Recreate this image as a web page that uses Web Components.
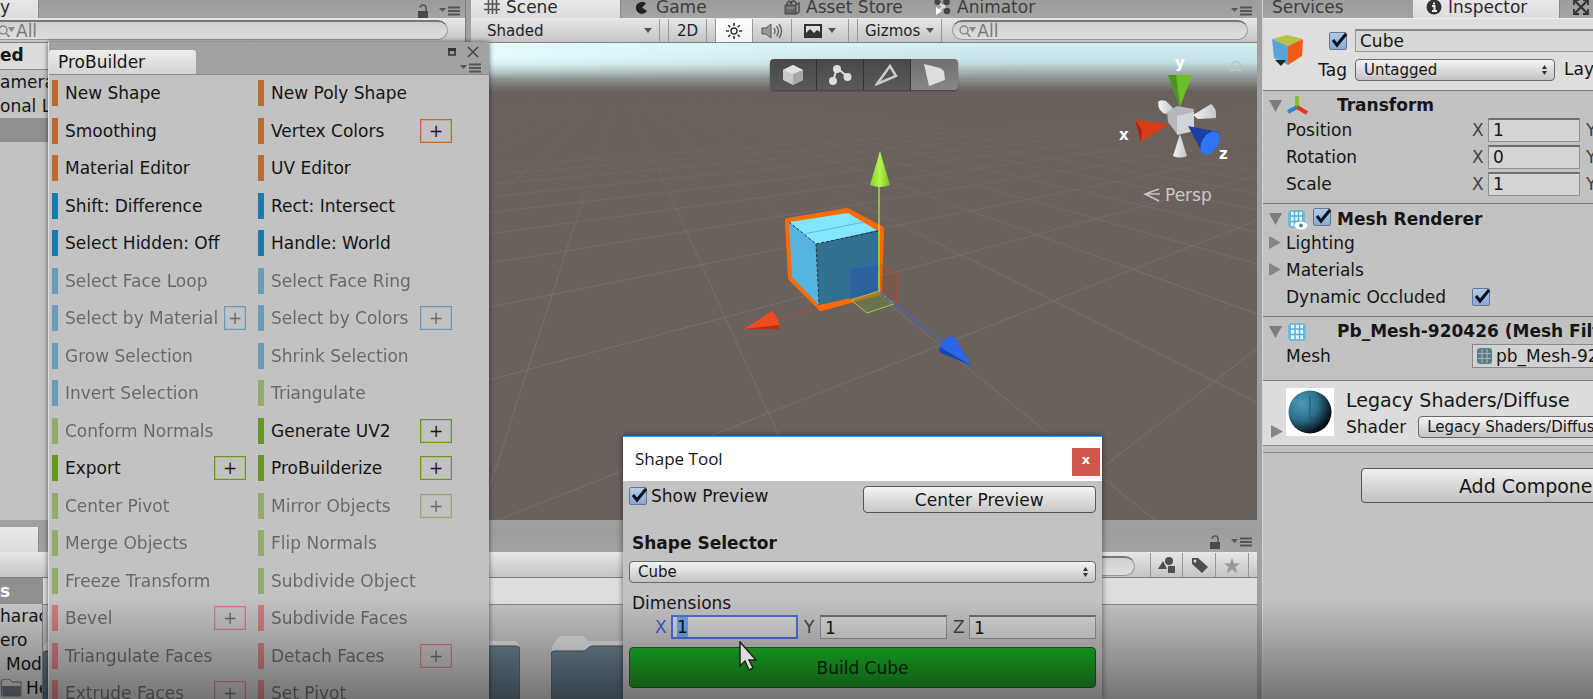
<!DOCTYPE html>
<html lang="en">
<head>
<meta charset="utf-8">
<title>Editor</title>
<style>
    html, body {
        margin: 0;
        height: 100%;
        overflow: hidden;
    }
    body {
        font-family: "DejaVu Sans", Verdana, sans-serif;
        font-size: 17px;
        line-height: 20px;
        color: #161616;
        background: #a2a2a2;
    }
</style>
</head>
<body>
<editor-app></editor-app>

<script>
const BASE = `
    * { box-sizing: border-box; }
    input, button, select { font: inherit; color: inherit; margin: 0; }
    svg { display: block; }
`;

function define(tag, css, html, setup) {
    customElements.define(tag, class extends HTMLElement {
        connectedCallback() {
            if (this.shadowRoot) return;
            this.attachShadow({ mode: 'open' });
            const markup = typeof html === 'function' ? html(this) : html;
            this.shadowRoot.innerHTML = `<style>${BASE}${css}</style>${markup}`;
            if (setup) setup(this.shadowRoot, this);
        }
    });
}

// name: [width, height, shapes]
const ICONS = {
    lock: [12, 14, '<path d="M1 7h10v7H1z" fill="#4a4a4a"/><path d="M3 3.5C4 0 9 0 9 4v3" fill="none" stroke="#555" stroke-width="1.6"/>'],
    menu: [22, 10, '<path d="M0 2h7L3.500 6z" fill="#555"/><path d="M9 1.500h12M9 5h12M9 8.500h12" stroke="#555" stroke-width="1.800"/>'],
    max: [8, 8, '<path d="M1 1h6v6H1z" fill="none" stroke="#333" stroke-width="1.600"/><path d="M0 0h8v3H0z" fill="#333"/>'],
    close: [12, 12, '<path d="M1 1l10 10M11 1L1 11" stroke="#444" stroke-width="1.500"/>'],
    grid: [16, 16, '<path d="M4.500 1v14M8.500 1v14M12.500 1v14M0 5h16M0 10.500h16" stroke="#555" stroke-width="1.600"/>'],
    game: [16, 16, '<path d="M12 4.500A6 6 0 1 0 13 12L8 8.500z" fill="#222"/>'],
    store: [16, 16, '<path d="M1 6h11v9H1z" fill="#666" stroke="#444"/><path d="M12 6l3-2v9l-3 2M3 6c0-5 4-5 5-1M6 5c1-4 6-4 6 0" fill="none" stroke="#444" stroke-width="1.400"/><path d="M3 9h7" stroke="#999"/>'],
    animator: [17, 17, '<path d="M4 4l10 9M13 4L6 12" stroke="#ddd" stroke-width="2"/><circle cx="3.500" cy="4" r="3" fill="#444"/><circle cx="12.500" cy="4" r="3.300" fill="#444"/><circle cx="13" cy="13" r="3.300" fill="#444"/><path d="M2 9l6 4-6 4z" fill="#fff"/>'],
    info: [16, 16, '<circle cx="8" cy="8" r="7.500" fill="#333"/><path d="M8 3.500v2M6 7h2.500v5M6 12h5" stroke="#eee" stroke-width="2" fill="none"/>'],
    expand: [16, 16, '<path d="M2 2l12 12M14 2L2 14" stroke="#333" stroke-width="2.200"/><path d="M1 6V1h5M10 1h5v5M15 10v5h-5M6 15H1v-5" fill="none" stroke="#333" stroke-width="1.800"/>'],
    down: [8, 5, '<path d="M0 0h8L4 5z" fill="#555"/>'],
    sun: [18, 18, '<circle cx="9" cy="9" r="3" fill="none" stroke="#333" stroke-width="1.400"/><path d="M9 1v3M9 14v3M1 9h3M14 9h3M3.300 3.300l2 2M12.700 12.700l2 2M14.700 3.300l-2 2M5.300 12.700l-2 2" stroke="#333" stroke-width="1.600"/>'],
    audio: [22, 18, '<path d="M1 6h4l5-4v14l-5-4H1z" fill="#999" stroke="#555"/><path d="M13 6q2 3 0 6M15.500 4q4 5 0 10M18 2q5 7 0 14" fill="none" stroke="#666" stroke-width="1.400"/>'],
    image: [18, 14, '<path d="M0 0h18v14H0z" fill="#333"/><path d="M2 2h14v6l-3-2-3 3-4-4-4 4z" fill="#ddd"/>'],
    search: [18, 12, '<circle cx="5" cy="5" r="4" fill="none" stroke="#888" stroke-width="1.500"/><path d="M8 8l3.500 4" stroke="#888" stroke-width="1.800"/><path d="M10 2h7l-3.500 5z" fill="#888"/>'],
    shapes: [18, 16, '<circle cx="11" cy="4" r="4" fill="#4e4e4e"/><path d="M0 12l5-8 4 8zM10 9h7v7h-7z" fill="#4e4e4e"/>'],
    tag: [17, 16, '<path d="M1 1h6l10 9-6 6L1 7z" fill="#4e4e4e"/><circle cx="4" cy="4" r="1.500" fill="#ddd"/>'],
    star: [16, 15, '<path d="M8 0l2 5.500h6L11.500 9l1.700 6L8 11.500 2.800 15l1.700-6L0 5.500h6z" fill="#999"/>'],
    foldOpen: [13, 12, '<path d="M0 0h13L6.500 12z" fill="#7d7d7d"/>'],
    foldShut: [12, 13, '<path d="M0 0v13l12-6.500z" fill="#858585"/>'],
    updown: [5, 10, '<path d="M0 4l2.500-4L5 4zM0 6l2.500 4L5 6z" fill="#333"/>'],
    cube: [34, 32, '<path d="M1 5L16 1l16 4-15 7z" fill="#b5c245"/><path d="M1 5l16 7v19L3 24z" fill="#58a6d8"/><path d="M32 5l-15 7v19l14-9z" fill="#ee5d17"/><path d="M4 26h11l-5 6z" fill="#1a2b2b"/>'],
    axes: [21, 19, '<path d="M10 0v11" stroke="#8bc220" stroke-width="4"/><path d="M10 11L1 16" stroke="#2e87cb" stroke-width="4"/><path d="M10 11l10 6" stroke="#dc3c20" stroke-width="4"/>'],
    mesh: [20, 20, '<rect x="1" y="1" width="18" height="18" rx="4" fill="#6cbade"/><path d="M4 3h12v14H4z" fill="#e2f7ff"/><path d="M8 2v15M12.500 2v15M3 7h14M3 12.500h14" stroke="#58add8" stroke-width="1.500"/>'],
    meshEye: [21, 21, '<rect x="1" y="1" width="17" height="18" rx="4" fill="#6cbade"/><path d="M4 3h11v14H4z" fill="#e2f7ff"/><path d="M7.500 2v15M11.500 2v15M3 7h14M3 12.500h14" stroke="#58add8" stroke-width="1.500"/><ellipse cx="14" cy="16.500" rx="6.500" ry="4" fill="#fff"/><circle cx="14" cy="16.500" r="2" fill="#4a88aa"/>'],
    meshSmall: [15, 16, '<rect width="15" height="16" rx="3" fill="#5e7c86"/><path d="M5 1v14M10 1v14M1 5.500h13M1 10.500h13" stroke="#9fb6bb" stroke-width="1.200"/>'],
    folderSmall: [22, 18, '<path d="M1 3q1-3 4-3h4l3 3h9v14H2z" fill="#c5ccd0" stroke="#667" /><path d="M2 7h19l-1 10H3z" fill="#66737c"/>'],
    object: [22, 22, '<path d="M11 1l10 5v10l-10 5-10-5V6z" fill="#c8c8c8"/><path d="M1 6l10 4 10-4-10-5z" fill="#e2e2e2"/><path d="M11 10v11l10-5V6z" fill="#a9a9a9"/>'],
    vertex: [24, 22, '<path d="M5 17L9 4l11 9" fill="none" stroke="#ddd" stroke-width="2"/><circle cx="5" cy="17" r="4" fill="#ddd"/><circle cx="9" cy="5" r="4" fill="#ddd"/><circle cx="19.500" cy="13" r="4" fill="#ddd"/>'],
    edge: [24, 22, '<path d="M2 20L15 2l6 10z" fill="none" stroke="#ccc" stroke-width="2.500"/>'],
    face: [24, 22, '<path d="M1 0l16 4 4 3 1 9-16 6z" fill="#ddd"/>']
};

define('ui-icon', ':host { display: block; flex: none; }', el => {
    const [w, h, shapes] = ICONS[el.getAttribute('name')];
    return `<svg width="${w}" height="${h}" viewBox="0 0 ${w} ${h}" aria-hidden="true">${shapes}</svg>`;
});

define('tab-bar', `
    :host {
        display: flex;
        flex: none;
        align-items: stretch;
        height: 18px;
        background: linear-gradient(#9c9c9c, #a4a4a4);
    }
    .end { display: flex; align-items: center; gap: 10px; margin-left: auto; padding: 4px 4px 0 0; }
`, `<slot></slot><div class="end"><slot name="end"></slot></div>`);

define('tab-item', `
    :host { display: block; flex: none; width: 150px; }
    button {
        display: flex;
        gap: 6px;
        align-items: center;
        width: 100%;
        height: 100%;
        padding: 0 0 5px var(--tab-pad, 13px);
        border: 0;
        color: #3c3c3c;
        background: none;
        white-space: nowrap;
        line-height: 12px;
    }
    :host([active]) button {
        color: #2a2a2a;
        border-right: 1px solid #8a8a8a;
        background: linear-gradient(#e8e8e8, #dcdcdc);
    }
`, '<button type="button"><slot></slot></button>');

define('tool-bar', `
    :host {
        display: flex;
        flex: none;
        height: 25px;
        background: linear-gradient(#e6e6e6, #c4c4c4);
        border-top: 1px solid #e9e9e9;
        border-bottom: 1px solid #808080;
    }
`, '<slot></slot>');

define('tool-button', `
    :host { display: block; flex: none; }
    button {
        display: flex;
        align-items: center;
        gap: 6px;
        height: 100%;
        width: 100%;
        justify-content: center;
        border: 0;
        border-right: 1px solid #999;
        padding: 0 7px;
        background: none;
        font-size: 15px;
        color: #222;
    }
    :host([start]) button { border-left: 1px solid #999; }
    :host([on]) button { background: linear-gradient(#fff, #f4f4f4); }
    :host([wide]) button { justify-content: space-between; }
`, el => `<button type="button" aria-label="${el.getAttribute('label') || el.textContent.trim()}"><slot></slot></button>`);

define('search-field', `
    :host { display: block; flex: 1; min-width: 0; }
    label {
        display: flex;
        align-items: center;
        height: 20px;
        margin-top: 1px;
        padding: 0 6px;
        border: 1px solid #999;
        border-top: 2px solid #777;
        border-radius: 10px;
        background: linear-gradient(#d0d0d0, #dedede);
    }
    input {
        flex: 1;
        min-width: 0;
        height: 18px;
        padding: 0;
        border: 0;
        outline: 0;
        background: none;
        color: #787878;
    }
`, el => `<label><ui-icon name="search"></ui-icon><input aria-label="Search" value="${el.getAttribute('value') || ''}"></label>`);

define('check-box', `
    :host { display: inline-block; flex: none; }
    label { display: flex; align-items: center; gap: 4px; }
    input {
        appearance: none;
        width: 18px;
        height: 18px;
        border: 1px solid #6b7685;
        border-radius: 2px;
        background: linear-gradient(#b4cbe6, #86a9d6);
    }
    .box { display: grid; }
    .box > * { grid-area: 1 / 1; }
    svg { pointer-events: none; }
`, el => `
    <label>
        <span class="box">
            <input type="checkbox" checked aria-label="${el.getAttribute('label') || el.textContent}">
            <svg width="18" height="18" viewBox="0 0 18 18"><path d="M4 8l4 5L17 2" fill="none" stroke="#0a1020" stroke-width="3"/></svg>
        </span>
        <slot></slot>
    </label>`);

define('pop-up', `
    :host { display: grid; grid-template-columns: minmax(0, 1fr) auto; align-items: center; min-width: 0; }
    select {
        grid-area: 1 / 1 / 2 / 3;
        appearance: none;
        width: 100%;
        height: 22px;
        padding: 0 8px;
        font-size: 15px;
        line-height: 18px;
        border: 1px solid #6a6a6a;
        border-radius: 4px;
        background: linear-gradient(#f4f4f4, #c3c3c3);
    }
    ui-icon { grid-area: 1 / 2; margin-right: 8px; pointer-events: none; }
`, el => `
    <select aria-label="${el.getAttribute('label')}"><option>${el.getAttribute('value')}</option></select>
    <ui-icon name="updown"></ui-icon>`);

define('axis-field', `
    :host { display: block; flex: 1; min-width: 0; }
    label { display: flex; align-items: center; }
    span { width: 16px; color: #444; }
    input {
        flex: 1;
        min-width: 0;
        height: 24px;
        padding: 0 4px;
        border: 1px solid #909090;
        border-top: 2px solid #6e6e6e;
        border-radius: 0;
        outline: 0;
        background: #d4d4d4;
    }
    :host([active]) span { color: #3e5fd0; }
    :host([active]) input { border: 2px solid #4c6fe0; }
    input::selection { background: #6ba5ee; color: #111; }
`, el => `<label><span>${el.getAttribute('axis')}</span><input value="${el.getAttribute('value')}"></label>`,
(root, el) => {
    if (!el.hasAttribute('active')) return;
    const input = root.querySelector('input');
    input.focus();
    input.select();
});

/* ---- hierarchy ---- */

define('hierarchy-panel', `
    :host { display: flex; flex-direction: column; min-width: 0; overflow: hidden; background: #c2c2c2; border-right: 1px solid #777; }
    tab-item { --tab-pad: 0; width: 39px; }
    search-field { margin-left: -9px; margin-right: 17px; }
    ul { list-style: none; margin: 0; padding: 0; }
    li { height: 24px; line-height: 24px; white-space: nowrap; }
    .scene { height: 27px; background: #dcdcdc; border-bottom: 1px solid #888; font-weight: bold; }
    .picked { background: #909090; }
`, `
    <tab-bar>
        <tab-item active>y</tab-item>
        <ui-icon slot="end" name="lock"></ui-icon><ui-icon slot="end" name="menu"></ui-icon>
    </tab-bar>
    <tool-bar><search-field value="All"></search-field></tool-bar>
    <ul>
        <li class="scene">ed</li>
        <li>amera</li>
        <li>onal Li</li>
        <li class="picked"></li>
    </ul>`);

/* ---- scene ---- */

// Ground grid: two fans of lines, each running to its own vanishing point on the horizon.
function gridLines() {
    let d = '';
    for (let k = -8; k < 9; k++) {
        d += `M1600 85L${-340 + 635 * k} 600`;
        d += `M620 85L${1253 + 400 * k} 600`;
    }
    return d;
}

define('scene-canvas', `
    :host { display: block; position: relative; flex: 1; min-height: 0; overflow: hidden; background: #6a615d; }
    .view { width: 100%; height: 100%; }
    .modes { position: absolute; top: 16px; left: 0; right: 0; display: flex; justify-content: center; }
    .modes div { display: flex; border-radius: 4px; overflow: hidden; box-shadow: 0 1px 2px #0006; }
    .modes button {
        display: grid;
        place-items: center;
        width: 47px;
        height: 31px;
        border: 0;
        border-right: 1px solid #333;
        background: linear-gradient(#484848, #5a5a5a);
    }
    .modes button.on { border: 0; background: linear-gradient(#6f6f6f, #878787); }
    text { font-family: "DejaVu Sans", sans-serif; }
`, `
    <svg class="view" viewBox="471 43 786 477" preserveAspectRatio="xMidYMid slice">
        <defs>
            <linearGradient id="sky" x1="0" y1="0" x2="0" y2="1">
                <stop offset="0" stop-color="#d4eef4"/><stop offset=".4" stop-color="#c3dfe5"/>
                <stop offset=".7" stop-color="#949c9b"/><stop offset="1" stop-color="#6a635f"/>
            </linearGradient>
            <linearGradient id="glow" x1="0" x2="1">
                <stop offset="0" stop-color="#e8fdff" stop-opacity=".9"/><stop offset=".7" stop-color="#e0fbff" stop-opacity="0"/>
            </linearGradient>
            <linearGradient id="glowFade" x1="0" y1="0" x2="0" y2="1">
                <stop offset=".4" stop-color="#fff"/><stop offset="1" stop-color="#000"/>
            </linearGradient>
            <mask id="glowMask"><path d="M471 43h786v36H471z" fill="url(#glowFade)"/></mask>
            <linearGradient id="fade" gradientUnits="userSpaceOnUse" x1="0" y1="100" x2="0" y2="280">
                <stop offset="0" stop-color="#8a827d" stop-opacity="0"/><stop offset="1" stop-color="#8a827d" stop-opacity=".45"/>
            </linearGradient>
            <linearGradient id="lime"><stop offset="0" stop-color="#84d020"/><stop offset=".5" stop-color="#b5f550"/><stop offset="1" stop-color="#75bd1d"/></linearGradient>
            <linearGradient id="cone"><stop offset="0" stop-color="#f4f4f4"/><stop offset="1" stop-color="#c4c4c4"/></linearGradient>
        </defs>
        <path d="M471 43h786v48H471z" fill="url(#sky)"/>
        <path d="M471 43h786v36H471z" fill="url(#glow)" mask="url(#glowMask)"/>
        <path d="${gridLines()}" fill="none" stroke="url(#fade)"/>

        <path d="M788 221l59-10 34 18-2 63-58 16-30-30z" fill="#f60" stroke="#ff6a00" stroke-width="6" stroke-linejoin="round"/>
        <path d="M789 222l59-9 30 18-62 13z" fill="#83e6ff"/>
        <path d="M789 222l27 22 3 61-27-28z" fill="#55b4e2"/>
        <path d="M816 244l62-14v62l-59 13z" fill="#32708f"/>
        <path d="M789 222l27 22 62-13M816 244l3 61" fill="none" stroke="#153848" stroke-dasharray="3 2"/>
        <path d="M804 234l60-12" stroke="#67b7ce"/>

        <path d="M850 269l29-5v27l-29 8z" fill="#2450b466" stroke="#3266c8"/>
        <path d="M879 264l18 11v28l-18-12z" fill="#a8401f44" stroke="#b54a33"/>
        <path d="M851 300l28-9 15 13-27 9z" fill="#6a8b3a77" stroke="#a5c44a"/>
        <path d="M879 291V186" stroke="#9fdc40" stroke-width="1.500"/>
        <path d="M880 151l10 34q-10 4-20 0z" fill="url(#lime)"/>
        <path d="M813 310l-38 9" stroke="#c8452a" stroke-dasharray="8 2"/>
        <path d="M744 329l28-18q8 8 7 18z" fill="#f04a20"/>
        <path d="M744 329l35-4v4z" fill="#b5300f"/>
        <path d="M880 292l61 49" stroke="#3a66d8" stroke-width="1.500" stroke-dasharray="6 2"/>
        <path d="M972 366l-33-14q0-14 15-16z" fill="#2a66e6"/>
        <path d="M972 366l-33-14 1-5z" fill="#1a47b0"/>

        <path d="M1158 102q2-3 8-1l8 8-8 5q-8-2-8-12z" fill="url(#cone)"/>
        <path d="M1193 115l18-11q6 4 5 14l-18 1z" fill="url(#cone)"/>
        <path d="M1173 156l7-22 7 22q-7 3-14 0z" fill="url(#cone)"/>
        <path d="M1167 112l10-6 17 3-2 21-15 4-9-12z" fill="#b5b8ba"/>
        <path d="M1177 116l17-4v19l-17 4z" fill="#d2d5d6"/>
        <path d="M1168 75h24l-12 32z" fill="#6cbf2a"/>
        <path d="M1168 75l12 32-4-32z" fill="#4c9420"/>
        <path d="M1135 120l34 4-28 18z" fill="#d83c14"/>
        <path d="M1135 120l6 22 1-12z" fill="#a3290c"/>
        <path d="M1188 126l31 6-16 22z" fill="#1b3fa3"/>
        <ellipse cx="1210" cy="143" rx="8" ry="13" transform="rotate(32 1210 143)" fill="#2f74f5"/>
        <g fill="#fff" font-size="15" font-weight="bold">
            <text x="1175" y="68">y</text><text x="1119" y="140">x</text><text x="1219" y="159">z</text>
        </g>
        <path d="M1159 189l-14 5 14 7M1145 194h15" fill="none" stroke="#c8c4c2" stroke-width="1.500"/>
        <text x="1165" y="201" font-size="17" fill="#cbc8c6">Persp</text>
        <path d="M1230 70h10v-3a4 4 0 0 0-8-2" fill="none" stroke="#b4c8cc" stroke-width="2"/>
    </svg>
    <div class="modes"><div>
        <button type="button" aria-label="Object"><ui-icon name="object"></ui-icon></button>
        <button type="button" aria-label="Vertex"><ui-icon name="vertex"></ui-icon></button>
        <button type="button" aria-label="Edge"><ui-icon name="edge"></ui-icon></button>
        <button type="button" class="on" aria-label="Face"><ui-icon name="face"></ui-icon></button>
    </div></div>`);

define('scene-panel', `
    :host { display: flex; flex-direction: column; min-width: 0; }
    tool-bar { padding-left: 9px; }
    .shade { width: 180px; }
    .two { width: 39px; margin-left: 8px; }
    .sun { width: 38px; margin-left: 8px; }
    .audio { width: 39px; }
    .image { width: 57px; }
    .gizmos { margin-left: 8px; }
    search-field { margin: 0 9px 0 10px; }
`, `
    <tab-bar>
        <tab-item active><ui-icon name="grid"></ui-icon>Scene</tab-item>
        <tab-item><ui-icon name="game"></ui-icon>Game</tab-item>
        <tab-item><ui-icon name="store"></ui-icon>Asset Store</tab-item>
        <tab-item><ui-icon name="animator"></ui-icon>Animator</tab-item>
        <ui-icon slot="end" name="menu"></ui-icon>
    </tab-bar>
    <tool-bar>
        <tool-button class="shade" wide>Shaded<ui-icon name="down"></ui-icon></tool-button>
        <tool-button class="two" start>2D</tool-button>
        <tool-button class="sun" start on label="Lighting"><ui-icon name="sun"></ui-icon></tool-button>
        <tool-button class="audio" label="Audio"><ui-icon name="audio"></ui-icon></tool-button>
        <tool-button class="image" label="Effects"><ui-icon name="image"></ui-icon><ui-icon name="down"></ui-icon></tool-button>
        <tool-button class="gizmos" start>Gizmos<ui-icon name="down"></ui-icon></tool-button>
        <search-field value="All"></search-field>
    </tool-bar>
    <scene-canvas></scene-canvas>`);

/* ---- project ---- */

define('asset-folder', ':host { display: block; flex: none; }', `
    <svg width="96" height="82" viewBox="0 0 96 82">
        <defs><linearGradient id="f" x1="0" y1="0" x2="0" y2="1"><stop offset="0" stop-color="#6a8190"/><stop offset="1" stop-color="#56697a"/></linearGradient></defs>
        <path d="M1 80V10l5-7q2-3 6-3h17q4 0 5 2l3 3h53q4 0 5 5v70z" fill="#dcdedf"/>
        <path d="M0 80V19q0-4 3-4h29q3 0 5-3 2-2 5-2h50q4 0 4 4v66z" fill="url(#f)" stroke="#4a5862"/>
    </svg>`);

define('project-panel', `
    :host { display: flex; flex-direction: column; min-width: 0; overflow: hidden; padding-top: 7px; }
    tab-bar { height: 25px; }
    tab-item { width: 39px; }
    tool-bar { height: 26px; }
    search-field { margin: 2px 15px 0 auto; flex: 0 1 420px; }
    tool-button { width: 33px; }
    .last { width: 8px; }
    .body { display: flex; flex: 1; min-height: 0; }
    ul { flex: none; width: 43px; margin: 0; padding: 0; list-style: none; overflow: hidden; background: #c8c8c8; border-right: 1px solid #8a8a8a; }
    li { display: flex; gap: 4px; align-items: center; height: 24px; white-space: nowrap; }
    li:first-child { height: 26px; color: #fff; background: #909090; font-weight: bold; }
    .mod { padding-left: 6px; }
    .files { flex: 1; min-width: 0; display: flex; flex-direction: column; background: #c2c2c2; }
    .path { flex: none; height: 27px; background: #dedede; border-bottom: 1px solid #888; }
    .list { display: flex; gap: 31px; padding-top: 31px; overflow: hidden; }
`, `
    <tab-bar>
        <tab-item active></tab-item>
        <ui-icon slot="end" name="lock"></ui-icon><ui-icon slot="end" name="menu"></ui-icon>
    </tab-bar>
    <tool-bar>
        <search-field></search-field>
        <tool-button start label="By type"><ui-icon name="shapes"></ui-icon></tool-button>
        <tool-button label="By label"><ui-icon name="tag"></ui-icon></tool-button>
        <tool-button label="Favourites"><ui-icon name="star"></ui-icon></tool-button>
        <span class="last"></span>
    </tool-bar>
    <div class="body">
        <ul>
            <li>s</li>
            <li>harac</li>
            <li>ero</li>
            <li class="mod">Mod</li>
            <li><ui-icon name="folderSmall"></ui-icon>He</li>
        </ul>
        <div class="files">
            <div class="path"></div>
            <div class="list">${'<asset-folder></asset-folder>'.repeat(5)}</div>
        </div>
    </div>`);

/* ---- inspector ---- */

define('inspector-section', `
    :host { display: block; padding: 4px 0 6px 6px; border-bottom: 1px solid #777; }
    header { display: grid; grid-template-columns: 18px 26px 24px 1fr; align-items: center; height: 21px; }
    h2 { margin: 0; font-size: 17px; line-height: 21px; white-space: nowrap; }
`, el => `
    <header>
        <ui-icon name="foldOpen"></ui-icon>
        <ui-icon name="${el.getAttribute('icon')}"></ui-icon>
        <span>${el.hasAttribute('toggle') ? '<check-box label="Enabled"></check-box>' : ''}</span>
        <h2>${el.getAttribute('heading')}</h2>
    </header>
    <slot></slot>`);

define('property-row', `
    :host { display: grid; grid-template-columns: 17px 186px 1fr; align-items: center; height: 27px; }
    .value { display: flex; align-items: center; gap: 6px; min-width: 0; }
`, el => `
    <span>${el.hasAttribute('fold') ? '<ui-icon name="foldShut"></ui-icon>' : ''}</span>
    <span>${el.getAttribute('label')}</span>
    <div class="value"><slot></slot></div>`);

const vector = (label, v) => `
    <property-row label="${label}">
        ${['X', 'Y', 'Z'].map(axis => `<axis-field axis="${axis}" value="${v}"></axis-field>`).join('')}
    </property-row>`;

define('inspector-panel', `
    :host { display: block; overflow: hidden; background: #c2c2c2; border-left: 1px solid #d4d4d4; }
    .inner { min-width: 545px; }
    .services { --tab-pad: 9px; width: 150px; }
    .inspector { width: 147px; }
    .object {
        display: grid;
        grid-template-columns: 34px 34px 1fr;
        gap: 7px 8px;
        align-items: center;
        padding: 10px 0 9px 8px;
        border-top: 1px solid #eee;
        border-bottom: 1px solid #777;
        background: #dedede;
    }
    .object > ui-icon { grid-row: 1 / 3; margin-bottom: 10px; }
    .key { justify-self: end; }
    .name { height: 23px; padding: 0 4px; border: 1px solid #999; border-top: 2px solid #888; background: #d8d8d8; }
    .tag { display: flex; gap: 9px; }
    .tag pop-up { flex: 0 0 200px; }
    .mesh {
        display: flex;
        flex: 1;
        gap: 4px;
        align-items: center;
        height: 24px;
        padding: 0 4px;
        border: 1px solid #888;
        background: #d2d2d2;
        text-align: left;
    }
    .filter { padding-bottom: 11px; }
    .material { display: flex; gap: 12px; padding: 7px 0 7px 8px; background: #dcdcdc; border-bottom: 1px solid #888; }
    .material > ui-icon { align-self: flex-end; }
    .ball { flex: none; margin-left: -9px; }
    .ball svg { background: #fff; }
    .info { flex: 1; display: flex; flex-direction: column; gap: 4px; }
    h3 { margin: 0; font-weight: normal; font-size: 19px; line-height: 24px; }
    .shader { display: flex; align-items: center; gap: 12px; }
    .shader pop-up { flex: 1; }
    footer { margin-top: 6px; padding-top: 15px; border-top: 1px solid #888; text-align: center; }
    footer button {
        width: 350px;
        height: 35px;
        font-size: 19px;
        border: 1px solid #555;
        border-radius: 4px;
        background: linear-gradient(#f0f0f0, #c0c0c0);
    }
`, `
    <div class="inner">
        <tab-bar>
            <tab-item class="services">Services</tab-item>
            <tab-item class="inspector" active><ui-icon name="info"></ui-icon>Inspector</tab-item>
            <tab-item><ui-icon name="expand"></ui-icon></tab-item>
        </tab-bar>
        <div class="object">
            <ui-icon name="cube"></ui-icon>
            <check-box class="key" label="Active"></check-box>
            <input class="name" aria-label="Name" value="Cube">
            <span class="key">Tag</span>
            <div class="tag"><pop-up label="Tag" value="Untagged"></pop-up>Layer</div>
        </div>
        <inspector-section heading="Transform" icon="axes">
            ${vector('Position', 1)}${vector('Rotation', 0)}${vector('Scale', 1)}
        </inspector-section>
        <inspector-section heading="Mesh Renderer" icon="meshEye" toggle>
            <property-row fold label="Lighting"></property-row>
            <property-row fold label="Materials"></property-row>
            <property-row label="Dynamic Occluded"><check-box label="Dynamic Occluded"></check-box></property-row>
        </inspector-section>
        <inspector-section class="filter" heading="Pb_Mesh-920426 (Mesh Filter)" icon="mesh">
            <property-row label="Mesh"><button type="button" class="mesh"><ui-icon name="meshSmall"></ui-icon>pb_Mesh-920426</button></property-row>
        </inspector-section>
        <div class="material">
            <ui-icon name="foldShut"></ui-icon>
            <div class="ball">
                <svg width="48" height="48" viewBox="0 0 48 48">
                    <defs><radialGradient id="b" cx=".3" cy=".3" r=".75"><stop offset="0" stop-color="#4a9ab8"/><stop offset=".5" stop-color="#2f728c"/><stop offset="1" stop-color="#020a0e"/></radialGradient></defs>
                    <circle cx="24" cy="24" r="21.500" fill="url(#b)"/><path d="M24 8v24" stroke="#235468"/>
                </svg>
            </div>
            <div class="info">
                <h3>Legacy Shaders/Diffuse</h3>
                <div class="shader">Shader<pop-up label="Shader" value="Legacy Shaders/Diffuse"></pop-up></div>
            </div>
        </div>
        <footer><button type="button">Add Component</button></footer>
    </div>`);

/* ---- ProBuilder window ---- */

define('pb-action', `
    :host { display: flex; align-items: center; min-width: 0; padding-right: 12px; color: #151515; }
    .do {
        display: flex;
        align-items: center;
        flex: 1 0 auto;
        gap: 7px;
        height: 26px;
        padding: 0;
        border: 0;
        background: none;
        white-space: nowrap;
    }
    .do::before { content: ""; width: 6px; height: 26px; background: var(--tone); }
    .more {
        flex: 0 1 32px;
        min-width: 21px;
        height: 24px;
        margin-left: 6px;
        padding: 0;
        border: 1px solid var(--tone);
        outline: 1px solid color-mix(in srgb, var(--tone) 25%, transparent);
        outline-offset: -2px;
        background: none;
        line-height: 20px;
    }
    :host([off]) { opacity: .52; }
    :host([tone=orange]) { --tone: #bd6a2e; }
    :host([tone=blue]) { --tone: #187bb0; }
    :host([tone=green]) { --tone: #65981c; }
    :host([tone=red]) { --tone: #e0393f; }
`, el => `<button type="button" class="do"><slot></slot></button>
    ${el.hasAttribute('more') ? '<button type="button" class="more" aria-label="Options">+</button>' : ''}`);

// tone, label, state: "off" greys it out, "more" adds the options button
const ACTIONS = [
    ['orange', 'New Shape', ''], ['orange', 'New Poly Shape', ''],
    ['orange', 'Smoothing', ''], ['orange', 'Vertex Colors', 'more'],
    ['orange', 'Material Editor', ''], ['orange', 'UV Editor', ''],
    ['blue', 'Shift: Difference', ''], ['blue', 'Rect: Intersect', ''],
    ['blue', 'Select Hidden: Off', ''], ['blue', 'Handle: World', ''],
    ['blue', 'Select Face Loop', 'off'], ['blue', 'Select Face Ring', 'off'],
    ['blue', 'Select by Material', 'off more'], ['blue', 'Select by Colors', 'off more'],
    ['blue', 'Grow Selection', 'off'], ['blue', 'Shrink Selection', 'off'],
    ['blue', 'Invert Selection', 'off'], ['green', 'Triangulate', 'off'],
    ['green', 'Conform Normals', 'off'], ['green', 'Generate UV2', 'more'],
    ['green', 'Export', 'more'], ['green', 'ProBuilderize', 'more'],
    ['green', 'Center Pivot', 'off'], ['green', 'Mirror Objects', 'off more'],
    ['green', 'Merge Objects', 'off'], ['green', 'Flip Normals', 'off'],
    ['green', 'Freeze Transform', 'off'], ['green', 'Subdivide Object', 'off'],
    ['red', 'Bevel', 'off more'], ['red', 'Subdivide Faces', 'off'],
    ['red', 'Triangulate Faces', 'off'], ['red', 'Detach Faces', 'off more'],
    ['red', 'Extrude Faces', 'off more'], ['red', 'Set Pivot', 'off']
];

define('probuilder-window', `
    :host {
        display: flex;
        flex-direction: column;
        overflow: hidden;
        border-left: 1px solid #e0e0e0;
        background: #c2c2c2;
        box-shadow: 0 0 5px #0009;
    }
    .head { flex: none; display: flex; justify-content: space-between; align-items: flex-end; height: 33px; background: #a2a2a2; border-bottom: 1px solid #8c8c8c; }
    .tab { width: 147px; height: 24px; padding: 0 0 0 9px; border: 0; border-radius: 3px 3px 0 0; background: linear-gradient(#ececec, #d4d4d4); text-align: left; }
    .tools { display: flex; flex-direction: column; align-items: flex-end; gap: 5px; padding: 0 7px 1px 0; }
    .tools div { display: flex; gap: 11px; align-items: center; padding-right: 3px; }
    .grid { display: grid; grid-template-columns: 206px 206px; grid-auto-rows: 38px 37px; padding-left: 3px; margin-top: -1px; }
`, `
    <div class="head">
        <button type="button" class="tab">ProBuilder</button>
        <div class="tools">
            <div><ui-icon name="max"></ui-icon><ui-icon name="close"></ui-icon></div>
            <ui-icon name="menu"></ui-icon>
        </div>
    </div>
    <div class="grid">${ACTIONS.map(([tone, label, state]) => `<pb-action tone="${tone}" ${state}>${label}</pb-action>`).join('')}</div>`);

/* ---- Shape Tool window ---- */

define('shape-tool', `
    :host { display: block; background: #c2c2c2; box-shadow: 0 0 6px #0008; }
    header {
        display: flex;
        align-items: center;
        justify-content: space-between;
        height: 45px;
        padding: 0 2px 0 12px;
        border-top: 1px solid #3c96e8;
        background: #fff;
        font-family: "Open Sans", "Noto Sans", sans-serif;
    }
    header button { width: 28px; height: 28px; padding: 0 0 3px; margin-top: 5px; border: 0; color: #fff; background: #d0574d; font: bold 13px/20px "DejaVu Sans", sans-serif; }
    .body { display: flex; flex-direction: column; padding: 5px 6px; }
    .row { display: flex; justify-content: space-between; align-items: flex-start; }
    .center { width: 50%; height: 27px; border: 1px solid #555; border-radius: 4px; background: linear-gradient(#f4f4f4, #c6c6c6); }
    h2 { margin: 20px 0 8px 3px; font-size: 17px; line-height: 20px; }
    .dims { margin: 10px 0 2px 3px; }
    .axes { display: flex; gap: 6px; padding-left: 26px; }
    .build { margin-top: 8px; height: 41px; border: 1px solid #444; border-radius: 4px; background: linear-gradient(#18b325, #1c8f22); color: #0c2a0c; }
`, `
    <header>Shape Tool<button type="button" aria-label="Close">x</button></header>
    <div class="body">
        <div class="row">
            <check-box>Show Preview</check-box>
            <button type="button" class="center">Center Preview</button>
        </div>
        <h2>Shape Selector</h2>
        <pop-up label="Shape" value="Cube"></pop-up>
        <div class="dims">Dimensions</div>
        <div class="axes">
            <axis-field axis="X" value="1" active></axis-field>
            <axis-field axis="Y" value="1"></axis-field>
            <axis-field axis="Z" value="1"></axis-field>
        </div>
        <button type="button" class="build">Build Cube</button>
    </div>`);

/* ---- app ---- */

define('editor-app', `
    :host {
        display: grid;
        position: relative;
        height: 100vh;
        overflow: hidden;
        grid-template: minmax(0, 1fr) 179px / 466px minmax(0, 1fr) 331px;
        column-gap: 5px;
        background: #a0a0a0;
    }
    project-panel { grid-column: 1 / 3; }
    inspector-panel { grid-area: 1 / 3 / 3 / 4; }
    probuilder-window { position: absolute; left: 48px; top: 42px; bottom: 0; width: 441px; }
    shape-tool { position: absolute; left: 623px; top: 436px; bottom: 0; width: 479px; }
    .shade { position: absolute; left: 0; right: 0; bottom: 0; height: 100px; background: linear-gradient(transparent, #0006); pointer-events: none; }
    .cursor { position: absolute; left: 739px; top: 641px; }
`, `
    <hierarchy-panel></hierarchy-panel>
    <scene-panel></scene-panel>
    <project-panel></project-panel>
    <inspector-panel></inspector-panel>
    <probuilder-window></probuilder-window>
    <shape-tool></shape-tool>
    <div class="shade"></div>
    <svg class="cursor" width="19" height="30" viewBox="0 0 19 30"><path d="M1 1v24l5-5 4 9 4-2-4-8h7z" fill="#ddd" stroke="#222" stroke-width="1.500"/></svg>`);
</script>
</body>
</html>
